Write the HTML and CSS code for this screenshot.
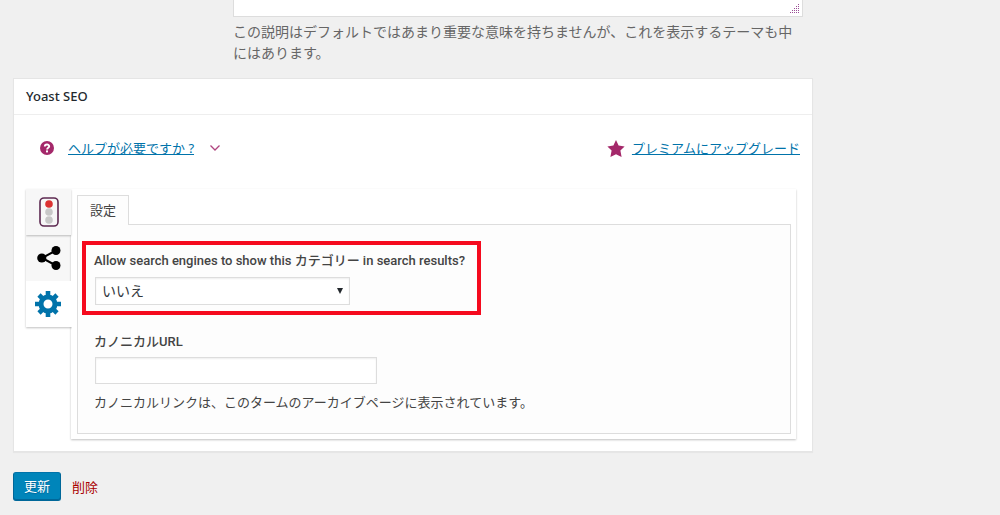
FILE: index.html
```
<!DOCTYPE html>
<html lang="ja">
<head>
  <meta charset="UTF-8">
  <meta name="viewport" content="width=device-width, initial-scale=1.0">
  <title>カテゴリーの編集</title>
  <link rel="stylesheet" href="styles.css">
</head>
<body>

  <form class="wrap" onsubmit="return false">

    <div class="term-description">
      <div class="textarea-box">
        <textarea id="description" aria-label="説明" rows="1"></textarea>
        <svg class="grip" viewBox="0 0 10 10" width="10" height="10" shape-rendering="crispEdges" aria-hidden="true">
          <path fill="none" stroke="#9b4f96" stroke-dasharray="1 1" d="M0 8.5h10M2 6.5h8M4 4.5h6M6 2.5h4M8 0.5h2"/>
        </svg>
      </div>
      <p>この説明はデフォルトではあまり重要な意味を持ちませんが、これを表示するテーマも中にはあります。</p>
    </div>

    <div class="postbox">
      <h2>Yoast SEO</h2>
      <div class="inside">

        <div class="help-bar">
          <svg class="help-icon" viewBox="0 0 14 14" width="14" height="14" aria-hidden="true">
            <circle cx="7" cy="7" r="7" fill="#a4286a"/>
            <path d="M4.8 5.5C4.8 2.9 9.2 2.9 9.2 5.3C9.2 6.8 7.1 6.7 7.1 8.4" fill="none" stroke="#fff" stroke-width="1.9"/>
            <rect x="6" y="9.4" width="2" height="2" fill="#fff"/>
          </svg>
          <a href="#help">ヘルプが必要ですか ?</a>
          <svg class="chevron" viewBox="0 0 10 6" width="10" height="6" aria-hidden="true">
            <path d="M0.5 0.5L5 5L9.5 0.5" fill="none" stroke="#b0447f" stroke-width="1.3"/>
          </svg>
          <svg class="star" viewBox="0 0 18 18" width="18" height="18" aria-hidden="true">
            <path d="M9 1L11.6 6.6L17.6 7.4L13.4 11.4L14.6 18L9 15.2L3.4 18L4.6 11.4L0.4 7.4L6.4 6.6Z" fill="#a4286a"/>
          </svg>
          <a href="#premium">プレミアムにアップグレード</a>
        </div>

        <div class="metabox">
          <nav class="side-tabs">
            <a href="#content" class="raised" aria-label="コンテンツ最適化">
              <svg viewBox="0 0 20 30" width="20" height="30">
                <rect x="1" y="1" width="18" height="28" rx="4" fill="#f7f7f7" stroke="#5d2a51" stroke-width="1.6"/>
                <circle cx="10" cy="7" r="3.8" fill="#dc3232"/>
                <circle cx="10" cy="15" r="3.8" fill="#c8c8c8"/>
                <circle cx="10" cy="23" r="3.8" fill="#c8c8c8"/>
              </svg>
            </a>
            <a href="#social" aria-label="ソーシャル">
              <svg viewBox="0 0 24 24" width="24" height="24">
                <path d="M19 4.5L5 12L19 19.5" fill="none" stroke="#000" stroke-width="2"/>
                <circle cx="19" cy="4.5" r="4.5"/>
                <circle cx="4.8" cy="12" r="4.6"/>
                <circle cx="19" cy="19.5" r="4.5"/>
              </svg>
            </a>
            <a href="#advanced" class="active" aria-label="高度な設定">
              <svg viewBox="0 0 26 26" width="26" height="26">
                <g fill="none" stroke="#0073aa">
                  <circle cx="13" cy="13" r="7" stroke-width="5"/>
                  <g stroke-width="4.6">
                    <path d="M13 0v5M13 21v5M0 13h5M21 13h5"/>
                    <path d="M4 4l3.4 3.4M18.6 18.6L22 22M22 4l-3.4 3.4M7.4 18.6L4 22"/>
                  </g>
                </g>
              </svg>
            </a>
          </nav>

          <div class="metabox-content">
            <a href="#settings" class="tab">設定</a>
            <div class="tab-panel">
              <div class="highlight">
                <label for="noindex">Allow search engines to show this カテゴリー in search results?</label>
                <div class="select-box">
                  <select id="noindex">
                    <option>はい</option>
                    <option selected>いいえ</option>
                  </select>
                  <svg class="arrow" viewBox="0 0 6 6" width="6" height="6" aria-hidden="true">
                    <path d="M0 0h6L3 6z" fill="#23282d"/>
                  </svg>
                </div>
              </div>
              <div class="field">
                <label for="canonical">カノニカルURL</label>
                <input type="text" id="canonical">
                <p>カノニカルリンクは、このタームのアーカイブページに表示されています。</p>
              </div>
            </div>
          </div>
        </div>

      </div>
    </div>

    <div class="actions">
      <button type="submit">更新</button>
      <a href="#delete" class="delete">削除</a>
    </div>

  </form>

</body>
</html>
```

FILE: styles.css
```
* { box-sizing: border-box; }
body {
  margin: 0;
  background: #f0f0f0;
  color: #444;
  font-family: "Noto Sans", "Noto Sans CJK JP", sans-serif;
  font-size: 13px;
  line-height: 20px;
}
p { margin: 0; }
svg { display: block; flex: none; }
a { color: #0073aa; }
.wrap { max-width: 813px; padding-left: 13px; }

.term-description {
  padding: 0 10px 0 220px;
  font-size: 14px;
  line-height: 21px;
  color: #666;
}
.textarea-box { position: relative; margin-bottom: 4px; }
textarea {
  display: block;
  width: 100%;
  height: 17px;
  border: 1px solid #ddd;
  border-top: 0;
  background: #fff;
  resize: none;
}
.grip { position: absolute; right: 3px; bottom: 3px; }

.postbox {
  margin-top: 15px;
  border: 1px solid #e5e5e5;
  background: #fff;
  box-shadow: 0 1px 1px rgba(0,0,0,0.04);
}
h2 {
  margin: 0;
  padding: 8px 12px;
  border-bottom: 1px solid #eee;
  font-size: 13px;
  line-height: 19px;
  font-weight: 500;
  color: #23282d;
}
.inside { padding: 23px 12px 12px; }

.help-bar { display: flex; align-items: center; padding-left: 14px; }
.help-icon { margin-right: 14px; }
.chevron { margin-left: 16px; }
.star { margin-left: auto; margin-right: 7px; }

.metabox { display: flex; margin: 31px 4px 0 0; }
.side-tabs { width: 45px; flex: none; }
.side-tabs a {
  display: flex;
  align-items: center;
  justify-content: center;
  height: 46px;
  background: #f7f7f7;
  box-shadow: 0 1px 2px rgba(0,0,0,0.25);
}
.side-tabs a.raised { position: relative; }
.side-tabs a.active {
  position: relative;
  width: 46px;
  padding-right: 2px;
  background: #fff;
  clip-path: inset(0 0 -4px -4px);
}
.metabox-content {
  flex: 1;
  padding: 6px 5px 5px 6px;
  background: #fff;
  box-shadow: 0 1px 2px rgba(0,0,0,0.25);
}
.tab {
  display: block;
  position: relative;
  width: 52px;
  height: 30px;
  margin-bottom: -1px;
  border: 1px solid #ddd;
  border-bottom: 0;
  background: #fdfdfd;
  color: #444;
  line-height: 28px;
  text-align: center;
  text-decoration: none;
}
.tab-panel {
  padding: 16px 4px 21px;
  border: 1px solid #ddd;
  background: #fdfdfd;
}
label {
  display: block;
  font-family: Roboto, "Noto Sans CJK JP", sans-serif;
  font-weight: 500;
}
.highlight {
  width: 399px;
  max-width: 100%;
  padding: 6px 8px;
  border: 4px solid #f50a1e;
}
.highlight label { margin-bottom: 6px; }
.select-box { position: relative; width: 255px; margin-left: 1px; }
select, input {
  display: block;
  border: 1px solid #ddd;
  background: #fff;
  font-family: inherit;
  font-size: 14px;
  box-shadow: inset 0 1px 2px rgba(0,0,0,0.07);
}
select {
  width: 100%;
  height: 28px;
  padding: 0 6px 2px;
  appearance: none;
  color: #32373c;
}
.arrow { position: absolute; right: 7px; top: 11px; }
.field { padding: 17px 12px 0; }
input { width: 282px; height: 27px; margin: 5px 1px 8px; }

.actions { display: flex; align-items: center; margin-top: 20px; }
button {
  height: 29px;
  padding: 0 10px 2px;
  border: 1px solid #006799;
  border-top-color: #0073aa;
  border-radius: 3px;
  background: #0085ba;
  box-shadow: inset 0 -1px 0 #006799;
  color: #fff;
  font-family: inherit;
  font-size: 13px;
  text-shadow: 0 1px 1px #006799;
}
.delete { margin-left: 11px; color: #a00; text-decoration: none; }
```
